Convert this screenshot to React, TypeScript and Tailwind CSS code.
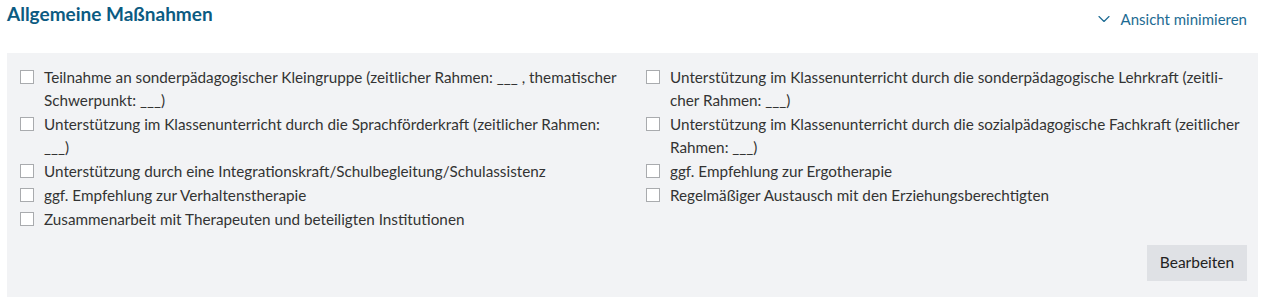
import { ChevronDown } from 'lucide-react';

const left = [
  ['Teilnahme an sonderpädagogischer Kleingruppe (zeitlicher Rahmen: ___ , thematischer', 'Schwerpunkt: ___)'],
  ['Unterstützung im Klassenunterricht durch die Sprachförderkraft (zeitlicher Rahmen:', '___)'],
  ['Unterstützung durch eine Integrationskraft/Schulbegleitung/Schulassistenz'],
  ['ggf. Empfehlung zur Verhaltenstherapie'],
  ['Zusammenarbeit mit Therapeuten und beteiligten Institutionen'],
];

const right = [
  ['Unterstützung im Klassenunterricht durch die sonderpädagogische Lehrkraft (zeitli-', 'cher Rahmen: ___)'],
  ['Unterstützung im Klassenunterricht durch die sozialpädagogische Fachkraft (zeitlicher', 'Rahmen: ___)'],
  ['ggf. Empfehlung zur Ergotherapie'],
  ['Regelmäßiger Austausch mit den Erziehungsberechtigten'],
];

function Item({ lines }: { lines: string[] }) {
  return (
    <label className="flex items-start gap-[10px]">
      <span className="mt-[4px] w-[14px] h-[14px] shrink-0 bg-white border border-[#a9abae]" />
      <span className="leading-[23px]">
        {lines.map((l, i) => (
          <span key={i} className="block whitespace-nowrap">{l}</span>
        ))}
      </span>
    </label>
  );
}

export default function App() {
  return (
    <div className="w-[1267px] h-[305px] bg-white px-[7px] pt-[2px] text-[#333] text-[15.25px]" style={{ fontFamily: 'Lato, "Noto Sans", sans-serif' }}>
      <div className="flex justify-between h-[51px]">
        <h2 className="text-[19px] font-bold text-[#0b5b82] leading-[24px]">Allgemeine Maßnahmen</h2>
        <button className="flex items-center gap-[7px] mt-[5px] mr-[13px] h-[24px] text-[15px] text-[#1d6b93]">
          <ChevronDown size={20} strokeWidth={1.4} />
          Ansicht minimieren
        </button>
      </div>
      <div className="bg-[#f2f3f5] w-[1251px] h-[244px] pt-[13px] pl-[13px] pr-[11px] pb-[16px] flex flex-col">
        <div className="grid grid-cols-[626px_1fr]">
          <div className="flex flex-col gap-[1px]">
            {left.map((l, i) => <Item key={i} lines={l} />)}
          </div>
          <div className="flex flex-col gap-[1px]">
            {right.map((l, i) => <Item key={i} lines={l} />)}
          </div>
        </div>
        <div className="mt-auto flex justify-end">
          <button className="w-[100px] h-[36px] bg-[#dfe1e5] text-[#222] text-[15.5px]">Bearbeiten</button>
        </div>
      </div>
    </div>
  );
}
